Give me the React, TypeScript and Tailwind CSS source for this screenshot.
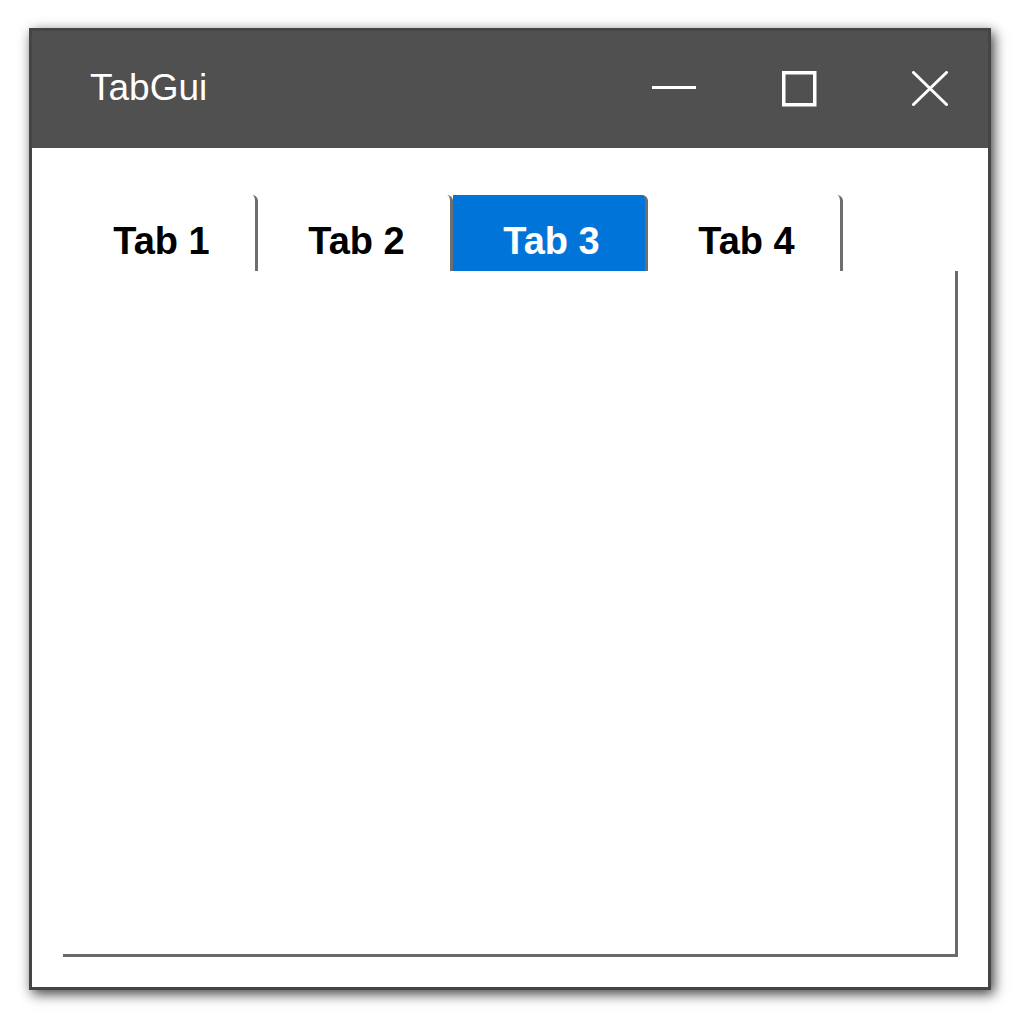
import React, { useState } from 'react';
import clsx from 'clsx';

const TABS = ['Tab 1', 'Tab 2', 'Tab 3', 'Tab 4'];

const App: React.FC = () => {
    const [active, setActive] = useState(2);

    return (
        <div className="w-[1020px] h-[1020px] bg-white pt-[28px] pl-[29px]" style={{ fontFamily: '"Liberation Sans", Arial, sans-serif' }}>
            {/* Window */}
            <div className="w-[962px] h-[962px] border-[3px] border-[#454545] bg-white flex flex-col shadow-[3px_4px_12px_rgba(0,0,0,0.75)]">
                {/* Title bar */}
                <div className="h-[117px] bg-[#505050] flex items-start shrink-0">
                    <div className="pl-[58px] pt-[38px] text-[37px] leading-none text-white">TabGui</div>
                    <div className="ml-auto flex items-start">
                        <button className="w-[44px] mt-[55px] mr-[86px] flex">
                            <svg width="44" height="3" viewBox="0 0 44 3">
                                <rect x="0" y="0" width="44" height="3" fill="#fff" />
                            </svg>
                        </button>
                        <button className="mt-[40px] mr-[95px] flex">
                            <svg width="35" height="36" viewBox="0 0 35 36">
                                <rect x="1.75" y="1.75" width="31" height="32" fill="none" stroke="#fff" strokeWidth="3.5" />
                            </svg>
                        </button>
                        <button className="mt-[40px] mr-[40px] flex">
                            <svg width="36" height="35" viewBox="0 0 36 35">
                                <path d="M1.5 1.5 L34.5 33.5 M34.5 1.5 L1.5 33.5" stroke="#fff" strokeWidth="3" strokeLinecap="round" />
                            </svg>
                        </button>
                    </div>
                </div>

                {/* Content */}
                <div className="flex-1 flex flex-col pl-[31px] pr-[30px] pt-[47px] pb-[30px]">
                    <div className="flex h-[76px] shrink-0">
                        {TABS.map((t, i) => (
                            <button
                                key={t}
                                onClick={() => setActive(i)}
                                className={clsx(
                                    'w-[195px] h-[76px] pt-[27px] pl-[5px] text-[38px] leading-none font-bold text-center border-r-[3px] border-[#6e6e6e] rounded-tr-[6px]',
                                    i === active ? 'bg-[#0074d8] text-white' : 'bg-white text-black'
                                )}
                            >
                                <span className="relative top-[-6px]">{t}</span>
                            </button>
                        ))}
                    </div>
                    <div className="flex-1 border-r-[3px] border-b-[3px] border-[#6a6a6a]"></div>
                </div>
            </div>
        </div>
    );
};

export default App;
